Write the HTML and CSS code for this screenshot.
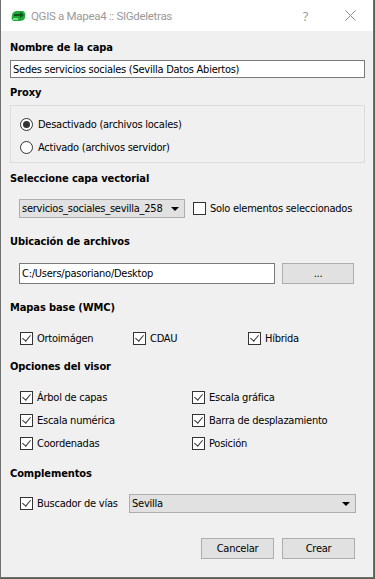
FILE: index.html
```html
<!DOCTYPE html>
<html lang="es">
<head>
  <meta charset="UTF-8" />
  <meta name="viewport" content="width=device-width, initial-scale=1.0"/>
  <title>QGIS a Mapea4 :: SIGdeletras</title>
  <link rel="stylesheet" href="styles.css">
</head>
<body>

  <div class="dialog">
    <!-- Barra de título -->
    <div class="titlebar">
      <svg class="app-icon" width="16" height="12" viewBox="0 0 16 12">
        <path d="M2 6 C2 2 5 1 8 1 L13 1 C15 2 16 4 15 7 C15 10 12 11 9 11 L5 11 C2 11 1 9 2 6 Z" fill="#1fa83a"/>
        <path d="M4 4 L10 4 L10 2 L14 5 L10 8 L10 6 L4 6 Z" fill="#14521f"/>
        <path d="M3 8 L8 8 L8 10 L3 10 Z" fill="#7be07f"/>
      </svg>
      <span class="title">QGIS a Mapea4 :: SIGdeletras</span>
      <span class="tb-help">?</span>
      <svg class="tb-close" width="11" height="11" viewBox="0 0 11 11">
        <path d="M0.5 0.5 L10.5 10.5 M10.5 0.5 L0.5 10.5" stroke="#8a8a8a" stroke-width="1"/>
      </svg>
    </div>

    <div class="content">
      <!-- Nombre -->
      <h2 class="label first">Nombre de la capa</h2>
      <div class="textbox name">Sedes servicios sociales (Sevilla Datos Abiertos)</div>

      <!-- Proxy -->
      <h2 class="label proxy">Proxy</h2>
      <div class="groupbox">
        <div class="radio-row">
          <span class="radio on"></span>
          <span>Desactivado (archivos locales)</span>
        </div>
        <div class="radio-row">
          <span class="radio"></span>
          <span>Activado (archivos servidor)</span>
        </div>
      </div>

      <!-- Capa vectorial -->
      <h2 class="label vector">Seleccione capa vectorial</h2>
      <div class="row layer-row">
        <div class="combo layer">
          <span>servicios_sociales_sevilla_258</span>
          <span class="arrow"></span>
        </div>
        <label class="check-item">
          <span class="box"></span>
          <span>Solo elementos seleccionados</span>
        </label>
      </div>

      <!-- Ubicación -->
      <h2 class="label files">Ubicación de archivos</h2>
      <div class="row path-row">
        <div class="textbox path">C:/Users/pasoriano/Desktop</div>
        <div class="button browse">...</div>
      </div>

      <!-- Mapas base -->
      <h2 class="label base">Mapas base (WMC)</h2>
      <div class="checks base-checks">
        <label class="check-item"><span class="box checked"></span><span>Ortoimágen</span></label>
        <label class="check-item"><span class="box checked"></span><span>CDAU</span></label>
        <label class="check-item"><span class="box checked"></span><span>Híbrida</span></label>
      </div>

      <!-- Opciones del visor -->
      <h2 class="label viewer">Opciones del visor</h2>
      <div class="checks viewer-checks">
        <label class="check-item"><span class="box checked"></span><span>Árbol de capas</span></label>
        <label class="check-item"><span class="box checked"></span><span>Escala gráfica</span></label>
        <label class="check-item"><span class="box checked"></span><span>Escala numérica</span></label>
        <label class="check-item"><span class="box checked"></span><span>Barra de desplazamiento</span></label>
        <label class="check-item"><span class="box checked"></span><span>Coordenadas</span></label>
        <label class="check-item"><span class="box checked"></span><span>Posición</span></label>
      </div>

      <!-- Complementos -->
      <h2 class="label plugins">Complementos</h2>
      <div class="row plugin-row">
        <label class="check-item streets"><span class="box checked"></span><span>Buscador de vías</span></label>
        <div class="combo city">
          <span>Sevilla</span>
          <span class="arrow"></span>
        </div>
      </div>

      <div class="actions">
        <div class="button">Cancelar</div>
        <div class="button">Crear</div>
      </div>
    </div>
  </div>

</body>
</html>
```

FILE: styles.css
```css
body {
  margin: 0;
  background: #55604c;
  font-family: "DejaVu Sans Condensed", Tahoma, sans-serif;
  font-size: 11px;
  letter-spacing: -0.25px;
  color: #000;
}
.dialog {
  width: 374px;
  height: 578px;
  box-sizing: border-box;
  background: #f0f0f0;
  border: 1px solid #6f7070;
  border-top: none;
}
.titlebar {
  height: 31px;
  background: #fff;
  display: flex;
  align-items: center;
  font-family: Roboto, "Open Sans", sans-serif;
  font-size: 11.5px;
  letter-spacing: -0.3px;
  color: #999;
}
.app-icon {
  margin: 0 5px 0 9px;
}
.title {
  flex: 1;
}
.tb-help {
  font-family: "Open Sans", sans-serif;
  font-size: 13px;
  margin-right: 37px;
}
.tb-close {
  margin-right: 17px;
}
.content {
  padding: 0 8px 0 9px;
}
.label {
  margin: 0;
  font-size: 11px;
  font-weight: bold;
  letter-spacing: -0.1px;
  line-height: 15px;
}
.first { padding-top: 9px; }
.proxy { margin-top: 7px; }
.vector { margin-top: 8px; }
.files { margin-top: 16px; }
.base { margin-top: 16px; }
.viewer { margin-top: 12px; }
.plugins { margin-top: 14px; }

.textbox {
  box-sizing: border-box;
  background: #fff;
  border: 1px solid #7a7a7a;
  padding: 0 2px;
  display: flex;
  align-items: center;
  white-space: nowrap;
}
.textbox.name {
  height: 18px;
  margin-top: 5px;
}

.groupbox {
  margin-top: 5px;
  height: 58px;
  box-sizing: border-box;
  border: 1px solid #dcdcdc;
  padding: 9px 9px 0;
  display: flex;
  flex-direction: column;
  gap: 5px;
}
.radio-row {
  height: 18px;
  display: flex;
  align-items: center;
  gap: 5px;
}
.radio {
  width: 13px;
  height: 13px;
  box-sizing: border-box;
  border: 1px solid #333;
  border-radius: 50%;
  background: #fff;
  display: flex;
  align-items: center;
  justify-content: center;
}
.radio.on::after {
  content: "";
  width: 7px;
  height: 7px;
  border-radius: 50%;
  background: #333;
}

.row {
  display: flex;
  align-items: center;
  padding: 0 10px 0 9px;
}
.layer-row {
  margin-top: 13px;
  gap: 8px;
}
.combo {
  box-sizing: border-box;
  height: 19px;
  background: #e1e1e1;
  border: 1px solid #adadad;
  display: flex;
  align-items: center;
  padding: 0 5px 0 2px;
  white-space: nowrap;
}
.combo span:first-child {
  flex: 1;
}
.arrow {
  width: 0;
  height: 0;
  border-left: 4px solid transparent;
  border-right: 4px solid transparent;
  border-top: 4px solid #000;
}
.combo.layer {
  width: 166px;
}

.check-item {
  display: flex;
  align-items: center;
  gap: 4px;
  height: 18px;
  white-space: nowrap;
}
.box {
  width: 13px;
  height: 13px;
  box-sizing: border-box;
  border: 1px solid #333;
  background: #fff;
  position: relative;
  flex: none;
}
.box.checked::after {
  content: "";
  position: absolute;
  left: 3px;
  top: 0px;
  width: 4px;
  height: 7px;
  border-right: 1px solid #333;
  border-bottom: 1px solid #333;
  transform: rotate(40deg);
}

.path-row {
  margin-top: 14px;
  gap: 7px;
}
.textbox.path {
  width: 256px;
  height: 21px;
}
.button {
  box-sizing: border-box;
  height: 21px;
  width: 73px;
  background: #e1e1e1;
  border: 1px solid #adadad;
  display: flex;
  align-items: center;
  justify-content: center;
}
.button.browse {
  width: 72px;
}

.checks {
  display: grid;
  padding-left: 10px;
  row-gap: 5px;
}
.base-checks {
  margin-top: 14px;
  grid-template-columns: 113px 115px auto;
}
.viewer-checks {
  margin-top: 14px;
  grid-template-columns: 172px auto;
}

.plugin-row {
  margin-top: 13px;
  padding-left: 10px;
}
.streets {
  width: 109px;
}
.combo.city {
  flex: 1;
  margin-right: -1px;
}

.actions {
  margin-top: 25px;
  display: flex;
  justify-content: flex-end;
  gap: 8px;
  padding-right: 10px;
}
```
